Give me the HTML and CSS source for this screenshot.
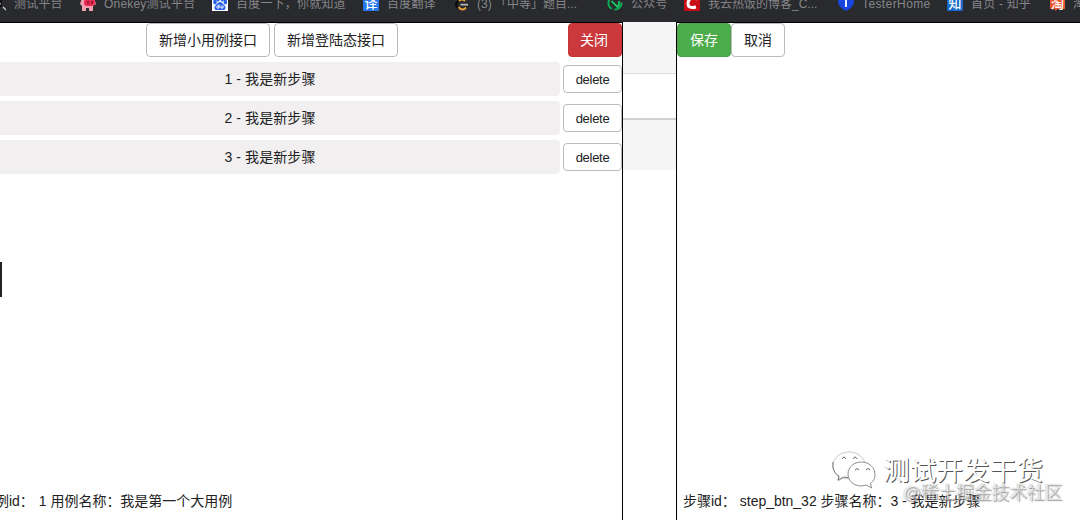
FILE: index.html
```html
<!DOCTYPE html>
<html lang="zh-CN">
<head>
<meta charset="utf-8">
<title>用例步骤</title>
<link rel="stylesheet" href="styles.css">
</head>
<body>
<nav class="bookmarks">
  <a class="bookmark bookmark-first"><svg viewBox="0 0 16 16"><path d="M0 0h12v12H0z" fill="#111"/><path d="M8 8l3 1M13 12l3 3" stroke="#ccc" stroke-width="1.3" fill="none"/></svg><span>测试平台</span></a>
  <a class="bookmark"><svg viewBox="0 0 16 16"><path d="M2 3h12l2 6-3 2v5H9v-3H6v3H2v-5L0 9z" fill="#f0a0b0"/><rect x="4" y="4" width="11" height="7" rx="3" fill="#e92b52"/><path d="M8 6v3M12 6v3" stroke="#7c1730" stroke-width="1.5"/></svg><span>Onekey测试平台</span></a>
  <a class="bookmark"><svg viewBox="0 0 16 16"><path d="M0 0h16v16H0z" fill="#fff"/><g fill="#2b62e8"><ellipse cx="3" cy="7" rx="1.8" ry="2.5"/><ellipse cx="6" cy="4" rx="1.7" ry="2.5"/><ellipse cx="10.3" cy="4" rx="1.7" ry="2.5"/><ellipse cx="13.3" cy="7" rx="1.8" ry="2.5"/><path d="M8 7c2 0 3 2 4.500 3.500 2 2 1 4.500-1 4.500H4.500c-2 0-3-2.500-1-4.500C5 9 6 7 8 7z"/></g><path d="M7 9.500V13H5.500c-1 0-1-2 0-2H7M9 10.500V13h2v-2.500" stroke="#fff" fill="none"/></svg><span>百度一下，你就知道</span></a>
  <a class="bookmark"><svg viewBox="0 0 16 16"><rect width="16" height="16" rx="1" fill="#2678ee"/><text x="8" y="13" class="glyph">译</text></svg><span>百度翻译</span></a>
  <a class="bookmark"><svg viewBox="0 0 16 16"><path d="M9 1L3 7.500Q1 9.500 3 11.500L5 13.500" fill="none" stroke="#0b0b0b" stroke-width="2.300"/><path d="M11 6Q8 3 5 6M4.500 12L6 13.500Q8.500 15.500 11 13.500L12 12.500" fill="none" stroke="#e9a33a" stroke-width="2"/><path d="M6.500 9.700H14" stroke="#b3b3b3" stroke-width="1.800"/></svg><span class="half-step">(3) 「中等」题目...</span></a>
  <a class="bookmark"><svg viewBox="0 0 16 16"><circle cx="8" cy="8" r="6.600" fill="none" stroke="#0caa51" stroke-width="2" stroke-dasharray="11 2.500"/><path d="M4.500 6l6 6q2-2 1.500-6" fill="none" stroke="#16c563" stroke-width="1.800"/></svg><span>公众号</span></a>
  <a class="bookmark"><svg viewBox="0 0 16 16"><rect width="16" height="16" rx="1" fill="#c90d17"/><path d="M13 4Q5 1 4 8q-.5 6 8 4" fill="none" stroke="#fff" stroke-width="3"/></svg><span class="tight">我去热饭的博客_C...</span></a>
  <a class="bookmark"><svg viewBox="0 0 16 16"><path d="M0 1h16v6q-1 6-8 9-7-3-8-9z" fill="#1745de"/><path d="M4 4h8M8 4v8" stroke="#fff" stroke-width="1.800"/></svg><span class="latin">TesterHome</span></a>
  <a class="bookmark"><svg viewBox="0 0 16 16"><rect width="16" height="16" rx="1" fill="#1769cd"/><text x="8" y="13" class="glyph">知</text></svg><span>首页 - 知乎</span></a>
  <a class="bookmark"><svg viewBox="0 0 16 16"><path d="M1 0h15v14H9l-3 2v-2H1z" fill="#eb5430"/><text x="8.500" y="12.500" class="glyph">淘</text></svg><span>淘宝</span></a>
</nav>
<main class="workspace">
  <section class="panel panel-case">
    <header class="toolbar">
      <div class="toolbar-main"><button class="btn">新增小用例接口</button><button class="btn">新增登陆态接口</button></div>
      <button class="btn btn-danger">关闭</button>
    </header>
    <ul class="steps">
      <li class="step"><div class="step-name">1 - 我是新步骤</div><button class="btn btn-small">delete</button></li>
      <li class="step"><div class="step-name">2 - 我是新步骤</div><button class="btn btn-small">delete</button></li>
      <li class="step"><div class="step-name">3 - 我是新步骤</div><button class="btn btn-small">delete</button></li>
    </ul>
    <div class="edge-handle"></div>
    <footer class="info info-case"><span>例id：</span><span>1 用例名称：我是第一个大用例</span></footer>
  </section>
  <div class="backdrop">
    <div class="strip strip-head"></div>
    <div class="strip strip-row"></div>
    <div class="strip strip-alt"></div>
  </div>
  <section class="panel panel-step">
    <header class="toolbar"><button class="btn btn-success">保存</button><button class="btn">取消</button></header>
    <footer class="info"><span>步骤id：</span><span>step_btn_32 步骤名称：3 - 我是新步骤</span></footer>
  </section>
</main>
<div class="watermark">
  <svg class="wechat" viewBox="0 0 44 40"><g fill="#fff"><path stroke="#c9c9c9" d="M17 1C8 1 1 7 1 15c0 5 3 9 6 11l-1 4 5-3c11 3 22-3 22-13C33 7 26 1 17 1z"/><path stroke="#777" d="M1 11c-1 7 2 12 6 14l-1 4 6-3 6 1" fill="none"/><path stroke="#8d8d8d" d="M29.500 11C22 11 16 16 16 23s6 12 13.500 12l5-1 5 3-1-4.500c3-2 4.500-5 4.500-9 0-7-6-12.500-13.500-12.500z"/></g><path d="M10 8q2-4 4 0M21 8q2-4 4 0M23 19q2-3 4 0M34 19q2-3 4 0" fill="none" stroke="#666"/></svg>
  <span>测试开发干货</span>
</div>
<div class="credit">@稀土掘金技术社区</div>
</body>
</html>
```
FILE: styles.css
```css
* { box-sizing: border-box; }
body {
  margin: 0;
  height: 520px;
  overflow: hidden;
  display: flex;
  flex-direction: column;
  background: #fff;
  color: #222;
  font: 14px/20px "Liberation Sans", "Noto Sans CJK SC", sans-serif;
}
.bookmarks {
  flex: none;
  height: 22px;
  overflow: hidden;
  display: grid;
  grid-template-columns: 80px 132px 151px 91px 153px 77px 154px 109px 102px 31px;
  background: #292a2d;
  color: #85868a;
  font-size: 12px;
}
.bookmark {
  display: flex;
  align-items: center;
  gap: 8px;
  height: 16px;
  margin-top: -5px;
  white-space: nowrap;
  letter-spacing: .2px;
  min-width: 0;
}
.bookmark-first svg { margin-left: -10px; }
.bookmark svg { width: 16px; height: 16px; flex: none; }
.bookmark span { padding-top: 1px; }
.bookmark .latin { letter-spacing: .4px; }
.bookmark .tight { letter-spacing: 0; }
.bookmark .half-step { margin-left: -1px; letter-spacing: 0; }
.glyph { font: 500 13px "Noto Sans CJK SC", sans-serif; fill: #fff; text-anchor: middle; }
.workspace { flex: 1; min-height: 0; display: grid; grid-template-columns: 623px 53px 404px; }
.panel { display: flex; flex-direction: column; border-top: 1px solid #000; min-width: 0; }
.panel-case { border-right: 1px solid #000; }
.panel-step { border-left: 1px solid #000; }
.toolbar { display: flex; height: 34px; }
.toolbar-main { flex: 1; display: flex; gap: 4px; padding-left: 146px; }
.btn {
  height: 34px;
  padding: 0 12px;
  border: 1px solid #bbb;
  border-radius: 4px;
  background: #fff;
  color: #222;
  font: inherit;
  white-space: nowrap;
}
.btn-danger { padding: 0 13px 0 11px; background: #cb393c; border-color: #c53639; color: #fff; }
.btn-success { background: #4cab4a; border-color: #48a446; color: #fff; }
.btn-small { width: 59px; height: 28px; padding: 2px 0 0; font-size: 13px; letter-spacing: -.3px; }
.steps { list-style: none; margin: 5px 0 0; padding: 0; display: flex; flex-direction: column; gap: 5px; }
.step { display: flex; align-items: center; gap: 3px; height: 34px; }
.step-name { flex: 1; height: 34px; line-height: 34px; padding-right: 20px; text-align: center; background: #f1eff0; border-radius: 0 4px 4px 0; letter-spacing: .1px; }
.edge-handle { width: 2px; height: 35px; margin-top: 88px; background: #222326; }
.info { display: flex; gap: 4px; margin-top: auto; padding: 0 0 9px 6px; white-space: nowrap; letter-spacing: -.02px; }
.info-case { gap: 5px; padding-left: 0; margin-left: -5px; }
.strip-head { height: 52px; background: #f5f5f5; border-bottom: 1px solid #ddd; }
.strip-row { height: 46px; border-bottom: 2px solid #d0d0d0; }
.strip-alt { height: 50px; background: #f5f5f5; }
.watermark {
  position: absolute;
  left: 832px;
  top: 451px;
  display: flex;
  align-items: center;
  gap: 7px;
  color: #fff;
  font-size: 26.7px;
  line-height: 40px;
  white-space: nowrap;
  text-shadow: 1px 1px 0 #555;
}
.wechat { width: 44px; height: 40px; }
.credit {
  position: absolute;
  left: 903px;
  top: 482px;
  color: rgba(255, 255, 255, .5);
  font-size: 17.7px;
  line-height: 22px;
  white-space: nowrap;
  text-shadow: 1px 1px 1px rgba(90, 90, 90, .6), -1px 0 1px rgba(120, 120, 120, .3);
}
```
